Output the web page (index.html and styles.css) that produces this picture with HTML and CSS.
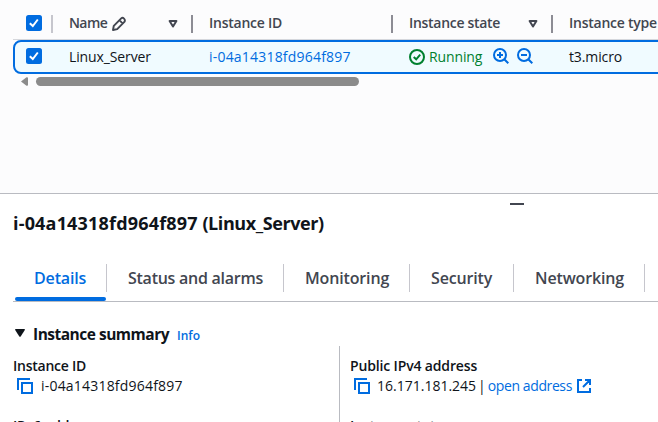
FILE: index.html
```
<!DOCTYPE html>
<html lang="en">
<head>
<meta charset="utf-8">
<title>Instances</title>
<link rel="stylesheet" href="styles.css">
</head>
<body>
<svg class="defs" aria-hidden="true">
  <symbol id="copy" viewBox="0 0 16 16"><path d="M1 12V1h12M5 5h10v10H5z" fill="none" stroke="currentColor" stroke-width="2"/></symbol>
  <symbol id="check" viewBox="0 0 16 16"><rect width="16" height="16" rx="2.5" fill="#006ce0"/><path d="M3.8 8.2l3 2.8 5-6.5" fill="none" stroke="#fff" stroke-width="2"/></symbol>
  <symbol id="sort" viewBox="0 0 10 8"><path d="M1.6 1h6.8L5 6.5z" fill="none" stroke="currentColor" stroke-width="2" stroke-linejoin="round"/></symbol>
</svg>
<main class="table">
  <div class="grid head">
    <div class="cell pick"><svg class="i16"><use href="#check"/></svg></div>
    <div class="cell"><span class="t-name">Name</span><svg class="pencil" viewBox="0 0 16 16"><path d="M2 14l.8-4.2L10.2 2.400Q11.600 1.200 13 2.600T13.600 5.600L6.200 13.100zM8.400 4.200l3.400 3.400" fill="none" stroke="currentColor" stroke-width="1.900" stroke-linejoin="round"/></svg><svg class="sort"><use href="#sort"/></svg></div>
    <div class="cell"><span class="t-id">Instance ID</span></div>
    <div class="cell"><span class="t-state">Instance state</span><svg class="sort"><use href="#sort"/></svg></div>
    <div class="cell last"><span class="t-id">Instance type</span></div>
  </div>
  <div class="grid row">
    <div class="cell pick"><svg class="i16"><use href="#check"/></svg></div>
    <div class="cell"><span class="t-server">Linux_Server</span></div>
    <div class="cell"><a class="t-code">i-04a14318fd964f897</a></div>
    <div class="cell state">
      <svg class="i16" viewBox="0 0 16 16"><circle cx="8" cy="8" r="7" fill="none" stroke="currentColor" stroke-width="2"/><path d="M4.700 8l2.500 2.300 4-4.600" fill="none" stroke="currentColor" stroke-width="2"/></svg>
      <span class="t-server running">Running</span>
      <svg class="i16 zoom-in" viewBox="0 0 16 16"><circle cx="7" cy="7" r="6" fill="none" stroke="currentColor" stroke-width="2"/><path d="M11 11l4.300 4.300M4 7h6M7 4v6" fill="none" stroke="currentColor" stroke-width="2"/></svg>
      <svg class="i16 zoom-out" viewBox="0 0 16 16"><circle cx="7" cy="7" r="6" fill="none" stroke="currentColor" stroke-width="2"/><path d="M11 11l4.300 4.300M4 7h6" fill="none" stroke="currentColor" stroke-width="2"/></svg>
    </div>
    <div class="cell"><span class="t-server">t3.micro</span></div>
  </div>
  <div class="scroll"><svg class="arrow" viewBox="0 0 7 9"><path d="M0 4.500L5.500 .3Q7 0 7 1V8Q7 9 5.500 8.700z" fill="currentColor"/></svg><span class="thumb"></span></div>
</main>
<section class="panel">
  <div class="handle"></div>
  <h1><span class="code">i-04a14318fd964f897</span> <span class="host">(Linux_Server)</span></h1>
  <nav class="tabs">
    <a class="tab active">Details</a><a class="tab wide">Status and alarms</a><a class="tab">Monitoring</a><a class="tab">Security</a><a class="tab">Networking</a>
  </nav>
  <div class="summary">
    <svg class="caret" viewBox="0 0 10 8"><path d="M.7 0h8.600q1 0 .5.900L5.700 7.400q-.7.900-1.400 0L.2.900Q-.3 0 .7 0z" fill="currentColor"/></svg>
    <h2>Instance summary</h2><a class="info">Info</a>
  </div>
  <div class="fields">
    <dl>
      <dt class="t-id">Instance ID</dt>
      <dd><svg class="i16 copy"><use href="#copy"/></svg><span class="t-code">i-04a14318fd964f897</span></dd>
      <dt class="next">IPv6 address</dt>
    </dl>
    <dl class="second">
      <dt>Public IPv4 address</dt>
      <dd><svg class="i16 copy"><use href="#copy"/></svg><span>16.171.181.245</span><span class="pipe">|</span><a class="open">open address</a><svg class="external" viewBox="0 0 14 14"><path d="M5 1H1v12h12V9M8 1h5v5M13 1L6 8" fill="none" stroke="currentColor" stroke-width="2"/></svg></dd>
      <dt class="next">Instance state</dt>
    </dl>
  </div>
</section>
</body>
</html>
```
FILE: styles.css
```
* { box-sizing: border-box; }
body { margin: 0; width: 658px; height: 422px; overflow: hidden; background: #fcfcfd; color: #0f141a; font: 14px/20px "Open Sans", sans-serif; }
svg { display: block; flex: none; }
.defs { width: 0; height: 0; position: absolute; }
.i16 { width: 16px; height: 16px; }
a { color: #006ce0; }
.table { height: 193px; padding-left: 13px; overflow: hidden; }
.grid { display: grid; grid-template-columns: 40px 140px 200px 160px 160px; width: 700px; }
.cell { display: flex; align-items: center; padding-left: 16px; white-space: nowrap; }
.cell.pick { padding-left: 13px; }
.head { height: 40px; padding-top: 15px; border-bottom: 1px solid #d5d7dc; color: #424650; font-weight: 600; }
.head .cell { height: 18px; border-right: 2px solid #8c8c94; }
.head .pick { border-color: #c6c6cd; align-items: flex-start; }
.head .last { border: 0; }
.sort { width: 10px; height: 8px; margin-left: auto; margin-right: 13px; }
.pencil { width: 16px; height: 16px; margin-left: 4px; }
.head span { margin-top: -2px; }
.row { height: 34px; border: 2px solid #006ce0; border-radius: 8px; background: #f0fbff; }
.row .cell { padding-left: 14px; width: calc(100% + 2px); }
.row .cell > span, .row .cell > a { margin-top: -1px; }
.row .cell.pick { padding: 6px 0 0 11px; align-items: flex-start; }
.state { color: #00802f; }
.running { margin-left: 4px; width: 54px; }
.state .zoom-in, .state .zoom-out { color: #006ce0; margin: -2px 0 0 10px; }
.state .zoom-out { margin-left: 8px; }
.scroll { display: flex; align-items: center; padding: 3px 0 0 8px; color: #8b8b8b; }
.arrow { width: 7px; height: 9px; }
.thumb { width: 323px; height: 9px; margin-left: 8px; border-radius: 5px; background: #8b8b8b; }
.t-name { letter-spacing: -.6px; }
.t-id { letter-spacing: -.25px; }
.t-state { letter-spacing: -.3px; }
.t-server { letter-spacing: -.12px; }
.t-code { letter-spacing: .2px; }
.panel { height: 229px; border-top: 1px solid #b9bbc1; background: #fff; overflow: hidden; }
.handle { width: 14px; height: 2px; margin: 9px 0 0 510px; background: #424650; }
h1 { margin: 6px 0 0 13px; font-size: 18px; line-height: 24px; font-weight: 700; }
.code { letter-spacing: .18px; }
.host { letter-spacing: -.42px; }
.tabs { display: grid; grid-template-columns: 94px 177px 126px 104px 131px 13px; height: 38px; margin: 29px 0 0 13px; border-bottom: 1px solid #b9bbc1; }
.tab { position: relative; height: 28px; padding: 4px 0 0 21px; border-right: 1px solid #c6c6cd; color: #424650; font-size: 16px; font-weight: 600; letter-spacing: -.15px; white-space: nowrap; }
.tab.wide { letter-spacing: -.26px; }
.tab.active { color: #006ce0; }
.active::after { content: ""; position: absolute; left: 2px; top: 33px; width: 91px; height: 4px; border-radius: 2px; background: #006ce0; }
.summary { display: flex; align-items: baseline; height: 23px; margin: 21px 0 0 15px; }
.caret { width: 10px; height: 8px; align-self: flex-start; margin-top: 6px; }
h2 { width: 136px; margin: 0 0 0 8px; font-size: 15.5px; line-height: 23px; font-weight: 700; letter-spacing: -.5px; white-space: nowrap; }
.info { margin-left: 8px; font-size: 12px; font-weight: 600; }
.fields { display: grid; grid-template-columns: 326px 1fr; margin-left: 13px; }
dl { margin: 0; padding-top: 10px; }
dl.second { border-left: 1px solid #b9bbc1; padding-left: 11px; }
dt { font-weight: 600; letter-spacing: -.15px; }
dl.second dt { margin-left: -1px; }
dt.t-id { letter-spacing: -.25px; }
dt.next { margin-top: 20px; }
dd { display: flex; align-items: center; height: 20px; margin: 0; white-space: nowrap; }
.copy { margin: 0 8px 0 4px; color: #006ce0; }
.second .copy { margin: 0 7px 0 3px; }
.pipe { margin: 0 2px 0 2px; }
.open { letter-spacing: -.4px; }
.external { width: 14px; height: 14px; margin-left: 5px; color: #006ce0; }
```
